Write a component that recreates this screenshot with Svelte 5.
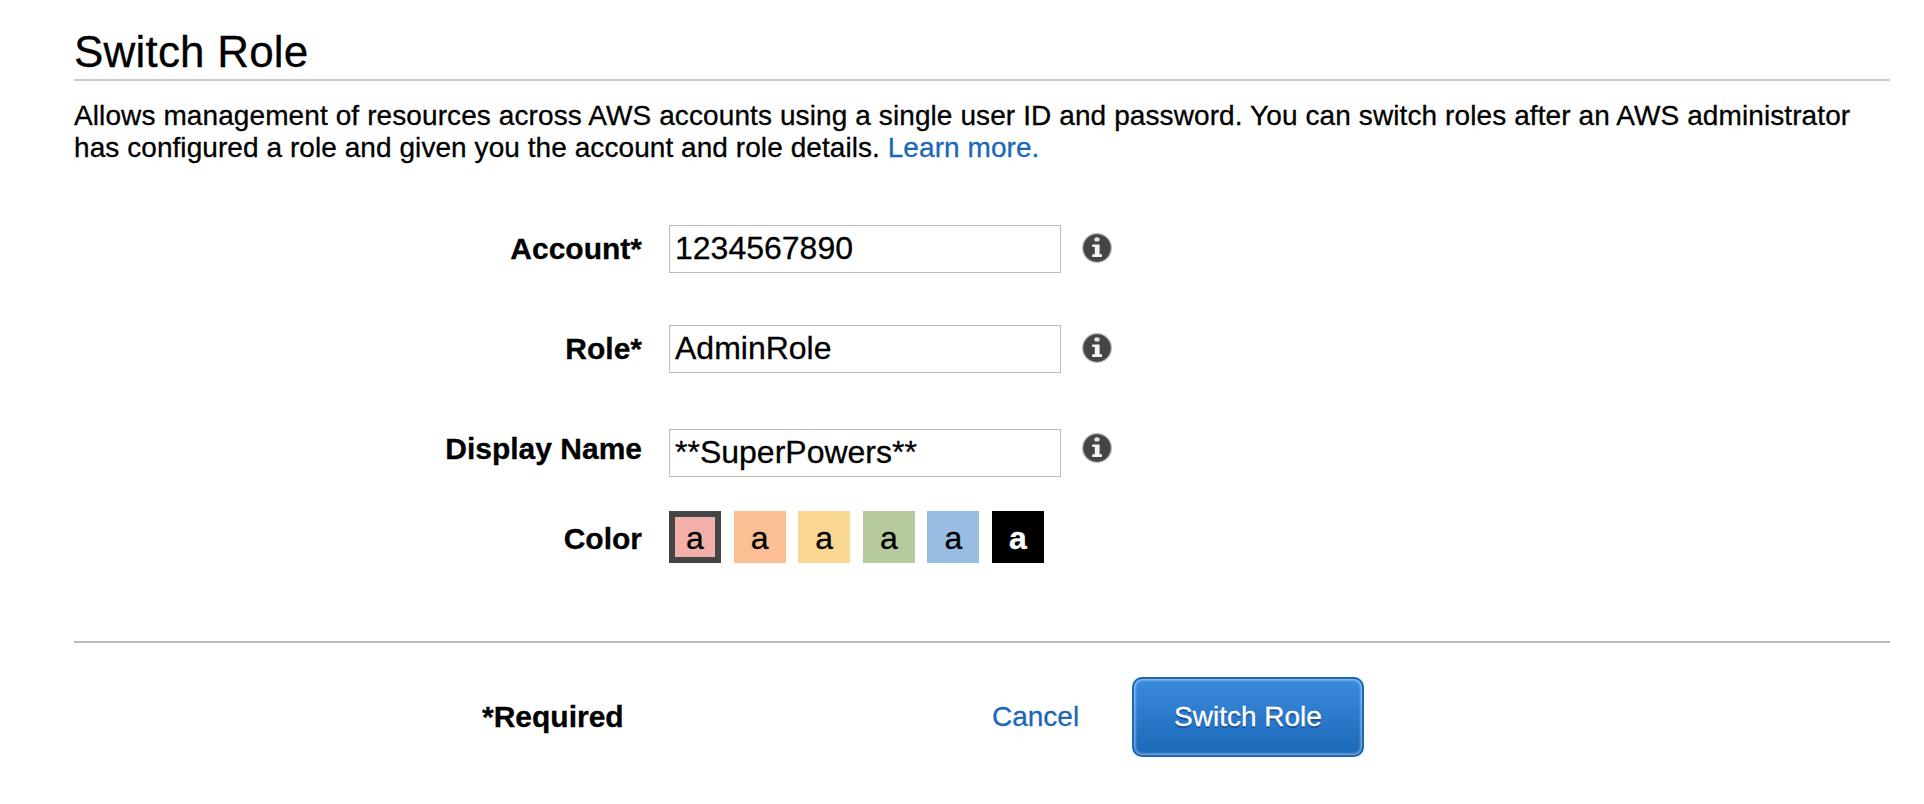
<script>
  let fields = $state([
    { id: 'account', label: 'Account*', value: '1234567890' },
    { id: 'role', label: 'Role*', value: 'AdminRole' },
    { id: 'display', label: 'Display Name', value: '**SuperPowers**' }
  ]);
  const colors = ['#f2b0a9', '#fbbf93', '#fad791', '#b7ca9d', '#99bce3', '#000000'];
  let selected = $state(0);
</script>

<main class="page">
  <h1>Switch Role</h1>
  <p class="intro">
    <span class="line wide">Allows management of resources across AWS accounts using a single user ID and password. You can switch roles after an AWS administrator</span>
    <span class="line">has configured a role and given you the account and role details. <a class="link" href="#learn">Learn more.</a></span>
  </p>

  <form class="form" onsubmit={(e) => e.preventDefault()}>
    {#each fields as field}
      <div class="row {field.id}">
        <label for={field.id}>{field.label}</label>
        <input id={field.id} type="text" spellcheck="false" bind:value={field.value} />
        <svg class="info" viewBox="0 0 30 30" aria-hidden="true">
          <circle cx="15" cy="15" r="15" fill="#b4b5b5" />
          <circle cx="15" cy="15" r="13.7" fill="#444646" />
          <ellipse cx="15" cy="6.4" rx="2.7" ry="2.2" fill="#e2e2e2" />
          <path d="M10.2 11.6H17.6V21.2H20V24H10.2V21.2H12.8V14H10.2Z" fill="#f4f4f4" />
        </svg>
      </div>
    {/each}
    <div class="row colors">
      <span class="label">Color</span>
      <div class="swatches">
        {#each colors as color, i}
          <button
            type="button"
            class="swatch"
            class:selected={selected === i}
            class:dark={i === 5}
            style="background-color: {color}"
            onclick={() => (selected = i)}>a</button>
        {/each}
      </div>
    </div>
  </form>

  <footer>
    <strong class="required">*Required</strong>
    <a class="link cancel" href="#cancel">Cancel</a>
    <button type="button" class="submit">Switch Role</button>
  </footer>
</main>

<style>
  :global(body) {
    background: #fff;
    overflow: hidden;
  }
  .page {
    box-sizing: border-box;
    width: 1924px;
    height: 804px;
    padding: 27px 34px 0 74px;
    font-family: "Liberation Sans", Arial, sans-serif;
    color: #000;
    -webkit-text-stroke: 0.3px;
  }
  h1 {
    box-sizing: border-box;
    height: 54px;
    margin: 0;
    border-bottom: 2px solid #ccc;
    font-size: 44px;
    line-height: 50px;
    font-weight: 400;
    letter-spacing: 0.2px;
  }
  .intro {
    margin: 19px 0 0;
    font-size: 28px;
    line-height: 32px;
    letter-spacing: 0.065px;
  }
  .line {
    display: block;
    white-space: nowrap;
  }
  .wide {
    letter-spacing: 0.1px;
  }
  .link {
    color: #1a67b7;
    text-decoration: none;
  }
  .form {
    display: flex;
    flex-direction: column;
    margin-top: 61px;
    height: 418px;
    box-sizing: border-box;
    border-bottom: 2px solid #bbb;
  }
  .row {
    display: grid;
    grid-template-columns: 568px 27px 392px 21px 30px;
    align-items: start;
    height: 48px;
    margin-bottom: 52px;
  }
  .row label,
  .label {
    font-size: 30px;
    line-height: 34px;
    font-weight: 700;
    padding-top: 7px;
    white-space: nowrap;
    text-align: right;
  }
  .row input {
    grid-column: 3;
    box-sizing: border-box;
    width: 392px;
    height: 48px;
    margin: 0;
    padding: 0 5px 2px;
    border: 1px solid #bbb;
    border-radius: 0;
    outline: none;
    background: #fff;
    font: 32px "Liberation Sans", Arial, sans-serif;
    color: #000;
  }
  .info {
    grid-column: 5;
    width: 30px;
    height: 30px;
    margin-top: 8px;
  }
  .row.display input {
    margin-top: 4px;
  }
  .row.display {
    margin-bottom: 38px;
  }
  .row.colors {
    margin: 0;
  }
  .swatches {
    grid-column: 3;
    display: flex;
    gap: 12.6px;
  }
  .swatch {
    box-sizing: border-box;
    flex: none;
    width: 52px;
    height: 52px;
    padding: 3px 0 0;
    border: 0;
    border-radius: 0;
    font: 32px/49px "Liberation Sans", Arial, sans-serif;
    color: #000;
  }
  .swatch.selected {
    border: 6px solid #444;
    line-height: 37px;
  }
  .swatch.dark {
    color: #fff;
    font-weight: 700;
  }
  .row .label {
    padding-top: 11px;
  }
  footer {
    display: flex;
    align-items: center;
    height: 80px;
    margin-top: 34px;
  }
  .required {
    width: 510px;
    padding-left: 408px;
    font-size: 30px;
    line-height: 34px;
  }
  .cancel {
    width: 140px;
    font-size: 28px;
    line-height: 32px;
  }
  .submit {
    box-sizing: border-box;
    width: 232px;
    height: 80px;
    padding: 0;
    border: 2px solid #1766b7;
    border-radius: 10px;
    background: linear-gradient(#3b8bdd, #1b68b8);
    box-shadow: inset 0 0 3px 1px rgba(255, 255, 255, 0.6);
    font: 28px/32px "Liberation Sans", Arial, sans-serif;
    color: #fff;
    text-shadow: 0 2px 1px rgba(0, 30, 90, 0.45);
  }
</style>
